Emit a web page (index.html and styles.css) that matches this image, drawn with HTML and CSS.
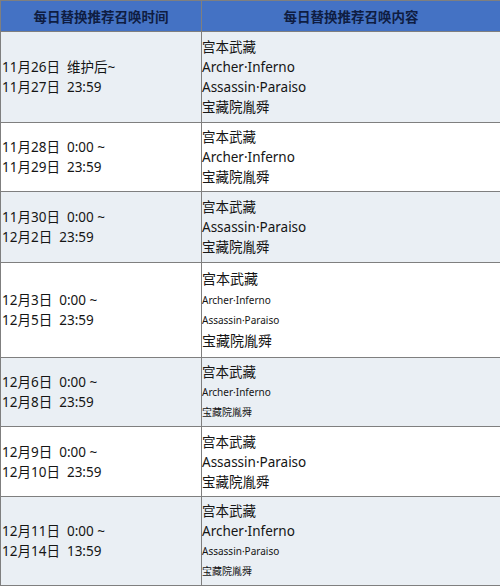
FILE: index.html
```html
<!DOCTYPE html>
<html lang="zh">
<head>
<meta charset="utf-8">
<title>每日替换推荐召唤</title>
<link rel="stylesheet" href="styles.css">
</head>
<body>
<table class="summon">
  <colgroup><col class="c-time"><col class="c-content"></colgroup>
  <thead>
    <tr class="head"><th>每日替换推荐召唤时间</th><th>每日替换推荐召唤内容</th></tr>
  </thead>
  <tbody>
    <tr class="alt r1">
      <td class="time"><div class="ln">11月26日&nbsp;&nbsp;维护后~</div><div class="ln">11月27日&nbsp;&nbsp;23:59</div></td>
      <td class="cont"><div class="ln">宫本武藏</div><div class="ln">Archer·Inferno</div><div class="ln">Assassin·Paraiso</div><div class="ln">宝藏院胤舜</div></td>
    </tr>
    <tr class="r2">
      <td class="time"><div class="ln">11月28日&nbsp;&nbsp;0:00 ~</div><div class="ln">11月29日&nbsp;&nbsp;23:59</div></td>
      <td class="cont"><div class="ln">宫本武藏</div><div class="ln">Archer·Inferno</div><div class="ln">宝藏院胤舜</div></td>
    </tr>
    <tr class="alt r3">
      <td class="time"><div class="ln">11月30日&nbsp;&nbsp;0:00 ~</div><div class="ln">12月2日&nbsp;&nbsp;23:59</div></td>
      <td class="cont"><div class="ln">宫本武藏</div><div class="ln">Assassin·Paraiso</div><div class="ln">宝藏院胤舜</div></td>
    </tr>
    <tr class="r4">
      <td class="time"><div class="ln">12月3日&nbsp;&nbsp;0:00 ~</div><div class="ln">12月5日&nbsp;&nbsp;23:59</div></td>
      <td class="cont"><div class="ln big">宫本武藏</div><div class="ln sm">Archer·Inferno</div><div class="ln sm">Assassin·Paraiso</div><div class="ln big">宝藏院胤舜</div></td>
    </tr>
    <tr class="alt r5">
      <td class="time"><div class="ln">12月6日&nbsp;&nbsp;0:00 ~</div><div class="ln">12月8日&nbsp;&nbsp;23:59</div></td>
      <td class="cont"><div class="ln">宫本武藏</div><div class="ln sm">Archer·Inferno</div><div class="ln sm">宝藏院胤舜</div></td>
    </tr>
    <tr class="r6">
      <td class="time"><div class="ln">12月9日&nbsp;&nbsp;0:00 ~</div><div class="ln">12月10日&nbsp;&nbsp;23:59</div></td>
      <td class="cont"><div class="ln">宫本武藏</div><div class="ln">Assassin·Paraiso</div><div class="ln">宝藏院胤舜</div></td>
    </tr>
    <tr class="alt r7">
      <td class="time"><div class="ln">12月11日&nbsp;&nbsp;0:00 ~</div><div class="ln">12月14日&nbsp;&nbsp;13:59</div></td>
      <td class="cont"><div class="ln">宫本武藏</div><div class="ln">Archer·Inferno</div><div class="ln sm">Assassin·Paraiso</div><div class="ln sm">宝藏院胤舜</div></td>
    </tr>
  </tbody>
</table>
</body>
</html>
```

FILE: styles.css
```css
html, body {
  margin: 0;
  padding: 0;
  background: #ffffff;
}

body {
  font-family: "Noto Sans", "Noto Sans CJK SC", sans-serif;
  color: #151515;
  font-size: 13.5px;
}

.summon {
  border-collapse: collapse;
  width: 500px;
  table-layout: fixed;
}

.c-time { width: 201px; }
.c-content { width: 299px; }

.summon th,
.summon td {
  border: 1px solid #7f7f7f;
  padding: 0;
}

.head th {
  background: #4472c4;
  color: #0f1d42;
  font-family: "Noto Sans CJK SC", sans-serif;
  font-weight: 700;
  font-size: 13.5px;
  height: 30px;
  text-align: center;
  vertical-align: middle;
}

.summon td {
  vertical-align: middle;
}

.summon td.time { padding-left: 1px; }

.alt td { background: #eaeff4; }

.ln {
  line-height: 20px;
  white-space: nowrap;
}

.ln.sm { font-size: 10px; }
.ln.big { font-size: 14px; line-height: 22px; }

.r1 { height: 91px; }
.r2 { height: 69px; }
.r3 { height: 71px; }
.r4 { height: 95px; }
.r5 { height: 69px; }
.r6 { height: 70px; }
.r7 { height: 89px; }
```
